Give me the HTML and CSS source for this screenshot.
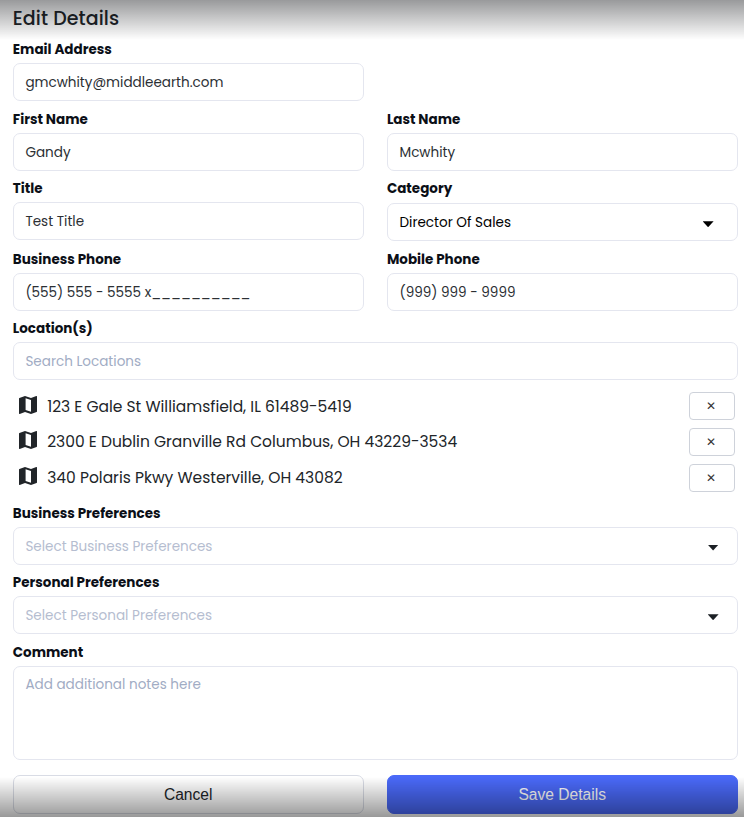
FILE: index.html
```html
<!DOCTYPE html>
<html lang="en">
<head>
    <meta charset="UTF-8" />
    <title>Edit Details</title>
    <meta name="viewport" content="width=device-width, initial-scale=1" />
    <link rel="stylesheet" href="styles.css">
</head>
<body>
    <svg class="sprite" aria-hidden="true">
        <symbol id="map" viewBox="0 0 18 18">
            <path fill-rule="evenodd" d="M17.5 0l-.2 0L12 2 6 0 .4 1.9C.2 2 0 2.2 0 2.4V17.5c0 .3.2.5.5.5l.2 0L6 16l6 2 5.6-1.9c.2-.1.4-.3.4-.5V.5c0-.3-.2-.5-.5-.5zM12 15.8L6.6 13.9V2.200L12 4.100z"/>
        </symbol>
    </svg>

    <form class="details">
        <h2>Edit Details</h2>

        <div class="row">
            <div class="field">
                <label for="email">Email Address</label>
                <input class="control" id="email" type="text" value="gmcwhity@middleearth.com" />
            </div>
        </div>

        <div class="row">
            <div class="field">
                <label for="firstName">First Name</label>
                <input class="control" id="firstName" type="text" value="Gandy" />
            </div>
            <div class="field">
                <label for="lastName">Last Name</label>
                <input class="control" id="lastName" type="text" value="Mcwhity" />
            </div>
        </div>

        <div class="row">
            <div class="field">
                <label for="title">Title</label>
                <input class="control" id="title" type="text" value="Test Title" />
            </div>
            <div class="field category">
                <label>Category</label>
                <div class="control select"><span>Director Of Sales</span><i class="caret"></i></div>
            </div>
        </div>

        <div class="row">
            <div class="field">
                <label for="business">Business Phone</label>
                <input class="control" id="business" type="text" value="(555) 555 - 5555 x__________" />
            </div>
            <div class="field">
                <label for="mobile">Mobile Phone</label>
                <input class="control" id="mobile" type="text" value="(999) 999 - 9999" />
            </div>
        </div>

        <div class="field">
            <label for="locations">Location(s)</label>
            <input class="control" id="locations" type="text" placeholder="Search Locations" />
        </div>

        <ul class="locations">
            <li><svg class="icon"><use href="#map"/></svg><span>123 E Gale St Williamsfield, IL 61489-5419</span><button type="button" class="remove">✕</button></li>
            <li><svg class="icon"><use href="#map"/></svg><span>2300 E Dublin Granville Rd Columbus, OH 43229-3534</span><button type="button" class="remove">✕</button></li>
            <li><svg class="icon"><use href="#map"/></svg><span>340 Polaris Pkwy Westerville, OH 43082</span><button type="button" class="remove">✕</button></li>
        </ul>

        <div class="field">
            <label>Business Preferences</label>
            <div class="control select empty"><span>Select Business Preferences</span><i class="caret"></i></div>
        </div>

        <div class="field">
            <label>Personal Preferences</label>
            <div class="control select empty"><span>Select Personal Preferences</span><i class="caret"></i></div>
        </div>

        <div class="field">
            <label for="comment">Comment</label>
            <textarea class="control comment" id="comment" placeholder="Add additional notes here"></textarea>
        </div>

        <div class="row buttons">
            <button type="button" class="btn">Cancel</button>
            <button type="button" class="btn save">Save Details</button>
        </div>
    </form>
    <div class="shade top"></div>
    <div class="shade bottom"></div>
</body>
</html>
```
FILE: styles.css
```css
* {
    box-sizing: border-box;
}
body {
    margin: 0;
    height: 817px;
    overflow: hidden;
    background: #fff;
    color: #212529;
    font-family: Poppins, Inter, sans-serif;
}
.sprite {
    display: none;
}
.details {
    padding: 0 6.4px 0 12.8px;
}
h2 {
    margin: 0;
    height: 36px;
    line-height: 37px;
    font-size: 19px;
    font-weight: 500;
    letter-spacing: 0.1px;
}
.row {
    display: grid;
    grid-template-columns: 1fr 1fr;
    gap: 23.4px;
}
.field {
    padding-bottom: 4.6px;
}
label {
    display: block;
    height: 27px;
    line-height: 27px;
    font-size: 13.5px;
    font-weight: 700;
    color: #0b0f17;
}
.control {
    display: block;
    width: 100%;
    height: 38px;
    padding: 2px 12px 0 11.6px;
    border: 1px solid #e4e6ef;
    border-radius: 7px;
    background: #fff;
    color: #2b2f34;
    font-family: inherit;
    font-size: 13.55px;
    line-height: 34px;
    outline: none;
}
.control::placeholder {
    color: #a1acc4;
    opacity: 1;
}
.category .control {
    margin-top: 1px;
}
.select {
    display: flex;
    align-items: center;
    justify-content: space-between;
    color: #000;
}
.empty {
    color: #b5bdd0;
}
.caret {
    width: 11px;
    height: 6px;
    margin: 2px 11px 0 0;
    background: #000;
    clip-path: polygon(0 0, 100% 0, 50% 100%);
}
.empty .caret {
    margin-right: 6px;
    background: #1c2025;
}
.locations {
    margin: 3.4px 0 4.2px;
    padding: 0 3px 0 6.4px;
    list-style: none;
}
.locations li {
    display: flex;
    align-items: center;
    height: 35.7px;
    font-size: 15.5px;
}
.icon {
    width: 18px;
    height: 18px;
    margin: 0 10px 3px 0;
    fill: #212529;
}
.remove {
    width: 46px;
    height: 28px;
    margin-left: auto;
    padding: 0 1px 0 0;
    border: 1px solid #ced2da;
    border-radius: 4px;
    background: #fff;
    color: #333;
    font-family: "DejaVu Sans", sans-serif;
    font-size: 12px;
}
.comment {
    height: 94px;
    padding-top: 8px;
    line-height: 20px;
    resize: none;
}
.buttons {
    margin-top: 11px;
}
.btn {
    height: 38.4px;
    padding: 0;
    border: 1px solid #d9dce5;
    border-radius: 7px;
    background: #fff;
    color: #212529;
    font-family: "Liberation Sans", Arial, sans-serif;
    font-size: 15.6px;
}
.save {
    border-color: #4a69f8;
    background: #4a69f8;
    color: #fff;
}
/* scroll shadows over the top and bottom of the panel */
.shade {
    position: fixed;
    left: 0;
    right: 0;
    height: 40px;
    pointer-events: none;
}
.top {
    top: 0;
    background: linear-gradient(rgba(0, 2, 6, 0.4), rgba(0, 2, 6, 0));
}
.bottom {
    bottom: 0;
    background: linear-gradient(rgba(0, 0, 0, 0), rgba(0, 0, 0, 0.4));
}
```
